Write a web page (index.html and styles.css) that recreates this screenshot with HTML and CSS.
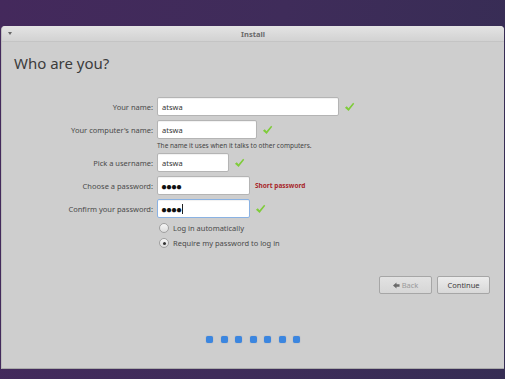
FILE: index.html
```html
<html>

<head>
    <title>Install</title>
    <link rel="stylesheet" href="styles.css">
</head>

<body>
    <div class="window">
        <div class="titlebar">
            <span class="menu-arrow"></span>
            <span class="title">Install</span>
        </div>
        <div class="content">
            <h1 class="heading">Who are you?</h1>

            <div class="form">
                <div class="row">
                    <label class="label">Your name:</label>
                    <div class="field field-name">atswa</div>
                    <svg class="check" viewBox="0 0 12 11"><path d="M1 6.2 L3 4.6 L4.9 7 L10 0.8 L11.2 2 L5 10 Z"/></svg>
                </div>
                <div class="row">
                    <label class="label">Your computer's name:</label>
                    <div class="field field-computer">atswa</div>
                    <svg class="check" viewBox="0 0 12 11"><path d="M1 6.2 L3 4.6 L4.9 7 L10 0.8 L11.2 2 L5 10 Z"/></svg>
                </div>
                <div class="hint">The name it uses when it talks to other computers.</div>
                <div class="row">
                    <label class="label">Pick a username:</label>
                    <div class="field field-user">atswa</div>
                    <svg class="check" viewBox="0 0 12 11"><path d="M1 6.2 L3 4.6 L4.9 7 L10 0.8 L11.2 2 L5 10 Z"/></svg>
                </div>
                <div class="row">
                    <label class="label">Choose a password:</label>
                    <div class="field field-pass dots">●●●●</div>
                    <span class="warning">Short password</span>
                </div>
                <div class="row">
                    <label class="label">Confirm your password:</label>
                    <div class="field field-pass dots focused">●●●●<span class="caret"></span></div>
                    <svg class="check" viewBox="0 0 12 11"><path d="M1 6.2 L3 4.6 L4.9 7 L10 0.8 L11.2 2 L5 10 Z"/></svg>
                </div>
                <div class="radio-row">
                    <span class="radio"></span>
                    <span>Log in automatically</span>
                </div>
                <div class="radio-row">
                    <span class="radio checked"></span>
                    <span>Require my password to log in</span>
                </div>
            </div>

            <div class="buttons">
                <button class="button" disabled>
                    <svg class="back-arrow" viewBox="0 0 8 8"><path d="M0 4 L4 0.5 L4 2.6 L7.5 2.6 L7.5 5.4 L4 5.4 L4 7.5 Z"/></svg>
                    Back
                </button>
                <button class="button">Continue</button>
            </div>

            <div class="progress">
                <span class="dot"></span>
                <span class="dot"></span>
                <span class="dot"></span>
                <span class="dot"></span>
                <span class="dot"></span>
                <span class="dot"></span>
                <span class="dot"></span>
            </div>
        </div>
    </div>
</body>

</html>
```

FILE: styles.css
```css
* {
    font-family: "Noto Sans", "Open Sans", sans-serif;
    box-sizing: border-box;
}

html, body {
    margin: 0;
    padding: 0;
    width: 100%;
    height: 100%;
}

body {
    background: linear-gradient(100deg, #44295c 0%, #3f2c5a 50%, #362d54 100%);
    overflow: hidden;
}

.window {
    margin-top: 26px;
    margin-left: 1px;
    width: 503px;
    height: 343px;
    background: #cecece;
    border-radius: 4px 4px 0 0;
    border-left: 1px solid #bcbcbc;
    border-bottom: 1px solid #a9a9a9;
    overflow: hidden;
}

.titlebar {
    height: 16px;
    background: linear-gradient(#e4e4e4, #d2d2d2);
    border-bottom: 1px solid #c4c4c4;
    display: flex;
    align-items: center;
    justify-content: center;
    position: relative;
}

.menu-arrow {
    position: absolute;
    left: 6px;
    top: 6px;
    width: 0;
    height: 0;
    border-left: 2.5px solid transparent;
    border-right: 2.5px solid transparent;
    border-top: 3px solid #666;
}

.title {
    font-size: 7.5px;
    font-weight: bold;
    color: #6a6a6a;
}

.heading {
    margin: 11px 0 0 12px;
    font-size: 15px;
    line-height: 20px;
    font-weight: normal;
    color: #3c3c3c;
}

.form {
    margin-top: 24px;
    padding-left: 12px;
    font-size: 7.5px;
    color: #4a4a4a;
}

.row {
    display: flex;
    align-items: center;
    height: 19px;
    margin-bottom: 4px;
}

.label {
    width: 139px;
    margin-right: 4px;
    text-align: right;
}

.field {
    height: 19px;
    background: #fff;
    border: 1px solid #b4b4b4;
    border-radius: 2px;
    padding: 0 4px;
    display: flex;
    align-items: center;
    color: #333;
    box-shadow: inset 0 1px 1px rgba(0, 0, 0, 0.06);
}

.field-name {
    width: 182px;
}

.field-computer {
    width: 100px;
}

.field-user {
    width: 72px;
}

.field-pass {
    width: 93px;
}

.dots {
    font-size: 10px;
    letter-spacing: -1px;
    color: #111;
    padding-left: 3px;
}

.focused {
    border-color: #8ab2e3;
}

.caret {
    display: inline-block;
    width: 1px;
    height: 10px;
    background: #222;
    margin-left: 1px;
}

.check {
    width: 11px;
    height: 10px;
    margin-left: 5px;
    fill: #7fcc3a;
}

.warning {
    margin-left: 5px;
    font-size: 6.5px;
    font-weight: bold;
    color: #a8262a;
}

.hint {
    margin: -1px 0 3px 143px;
    height: 8px;
    line-height: 8px;
    font-size: 6.5px;
    color: #444;
}

.radio-row {
    display: flex;
    align-items: center;
    height: 12px;
    margin-left: 145px;
    margin-bottom: 3px;
    gap: 4px;
}

.radio {
    width: 10px;
    height: 10px;
    border-radius: 50%;
    border: 1px solid #a0a0a0;
    background: linear-gradient(#f6f6f6, #dcdcdc);
    display: flex;
    align-items: center;
    justify-content: center;
}

.radio.checked::after {
    content: "";
    width: 3px;
    height: 3px;
    border-radius: 50%;
    background: #333;
}

.buttons {
    display: flex;
    justify-content: flex-end;
    gap: 5px;
    margin-top: 27px;
    padding-right: 14px;
}

.button {
    width: 53px;
    height: 18px;
    padding: 0;
    border: 1px solid #a6a6a6;
    border-radius: 2px;
    background: linear-gradient(#ececec, #d8d8d8);
    font-size: 7.5px;
    color: #3c3c3c;
    display: flex;
    align-items: center;
    justify-content: center;
    gap: 2px;
}

.button:disabled {
    color: #9a9a9a;
    background: linear-gradient(#e2e2e2, #d6d6d6);
}

.back-arrow {
    width: 7px;
    height: 7px;
    fill: #6a6a6a;
}

.progress {
    display: flex;
    justify-content: center;
    gap: 7.5px;
    margin-top: 42px;
}

.dot {
    width: 7px;
    height: 7px;
    border-radius: 2px;
    background: #3b86e0;
    box-shadow: 0 0 1px rgba(40, 90, 160, 0.5);
}
```
